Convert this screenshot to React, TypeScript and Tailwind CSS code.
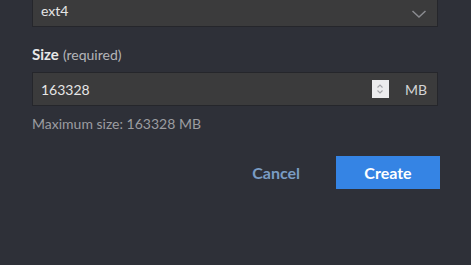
const App = () => {
  return (
    <div
      className="h-[265px] w-[471px] overflow-hidden bg-[#2e3038] text-[#e6e6e6]"
      style={{ fontFamily: "Lato, 'Noto Sans', sans-serif" }}
    >
      <div className="flex flex-col pl-8 pr-[33px]">
        {/* filesystem select */}
        <div className="-mt-[7px] flex h-[34px] items-center justify-between border border-[#25262b] bg-[#3b3b3c] pl-2 pr-[10px]">
          <span className="text-[14px]">ext4</span>
          <svg viewBox="0 0 16 10" className="mt-[7px] h-[10px] w-4" fill="none" stroke="#8a8b90" strokeWidth="1.5">
            <path d="M1.5 2 8 8l6.5-6" />
          </svg>
        </div>

        {/* size field */}
        <label className="mt-[17px] h-5 leading-5">
          <span className="text-[15px] font-bold text-[#e8e8e8]">Size</span>{" "}
          <span className="text-[14px] text-[#b4b5b8]">(required)</span>
        </label>
        <div className="mt-2 flex h-[34px] items-center border border-[#25262b] bg-[#3b3b3c] pl-2 pr-[10px]">
          <span className="flex-1 text-[14px]">163328</span>
          <div className="flex h-[18px] w-[17px] flex-col items-center justify-center bg-[#ececee]">
            <svg viewBox="0 0 10 12" className="h-3 w-[10px]" fill="none" stroke="#a2a3a8" strokeWidth="1.1">
              <path d="M2.5 4.5 5 2l2.5 2.5M2.5 7.5 5 10l2.5-2.5" />
            </svg>
          </div>
          <span className="ml-[16px] text-[14px] text-[#d4d4d6]">MB</span>
        </div>
        <p className="mt-[9px] text-[14px] leading-[18px] text-[#9c9da1]">Maximum size: 163328 MB</p>

        {/* actions */}
        <div className="-mr-[2px] mt-[23px] flex items-center justify-end gap-4">
          <button className="px-5 text-[16px] font-bold text-[#7a9cc4]">Cancel</button>
          <button className="h-[33px] w-[104px] bg-[#3584e4] text-[16px] font-bold text-white">Create</button>
        </div>
      </div>
    </div>
  );
};

export default App;
